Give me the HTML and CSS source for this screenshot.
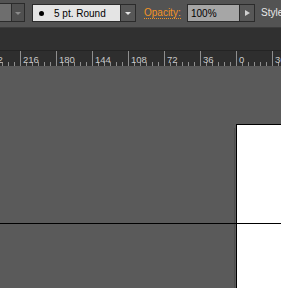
FILE: index.html
```html
<!DOCTYPE html>
<html>
<head>
<meta charset="utf-8">
<link rel="stylesheet" href="styles.css">
</head>
<body>
<div class="app">
  <div class="toolbar">
    <div class="field field-dim"></div>
    <div class="ddbtn"><span class="tri-down dim"></span></div>
    <div class="field stroke"><span class="dot"></span><span class="stroke-text">5 pt. Round</span></div>
    <div class="ddbtn"><span class="tri-down"></span></div>
    <span class="opacity-label"><span class="dotted">Opacity:</span></span>
    <div class="field opacity">100%</div>
    <div class="ddbtn"><span class="tri-right"></span></div>
    <span class="style-label">Style</span>
  </div>
  <div class="tabband"></div>
  <div class="ruler">
    <div class="seg first"><span class="num">252</span></div>
    <div class="seg"><span class="num">216</span></div>
    <div class="seg"><span class="num">180</span></div>
    <div class="seg"><span class="num">144</span></div>
    <div class="seg"><span class="num">108</span></div>
    <div class="seg"><span class="num">72</span></div>
    <div class="seg"><span class="num">36</span></div>
    <div class="seg"><span class="num">0</span></div>
    <div class="seg"><span class="num">36</span></div>
  </div>
  <div class="canvas">
    <div class="shadow"></div>
    <div class="artboard"></div>
    <div class="hline"></div>
  </div>
</div>
</body>
</html>
```
FILE: styles.css
```css
html, body {
  margin: 0;
  padding: 0;
  background: #5a5a5a;
}
.app {
  width: 281px;
  height: 288px;
  overflow: hidden;
  display: flex;
  flex-direction: column;
  font-family: "Liberation Sans", Arial, sans-serif;
}
.toolbar {
  height: 27px;
  flex: none;
  background: #535353;
  border-bottom: 1px solid #3c3c3c;
  display: flex;
  align-items: flex-start;
  white-space: nowrap;
  overflow: hidden;
}
.field {
  box-sizing: border-box;
  height: 18px;
  margin-top: 4px;
  border: 1px solid #2b2b2b;
  font-size: 10px;
  line-height: 16px;
  color: #000;
  flex: none;
}
.field-dim {
  width: 11px;
  height: 19px;
  margin-top: 3px;
  background: #6e6e6e;
  border-left: none;
  border-right: none;
}
.ddbtn {
  box-sizing: border-box;
  width: 15px;
  height: 18px;
  margin-top: 4px;
  background: #575757;
  border: 1px solid #2b2b2b;
  border-left: none;
  display: flex;
  align-items: center;
  justify-content: center;
  flex: none;
}
.field-dim + .ddbtn {
  width: 14px;
  height: 19px;
  margin-top: 3px;
  background: #505050;
  border-left: 1px solid #2b2b2b;
}
.tri-down {
  width: 0;
  height: 0;
  border-left: 3px solid transparent;
  border-right: 3px solid transparent;
  border-top: 3px solid #e6e6e6;
  margin-top: 1px;
}
.tri-down.dim {
  border-top-color: #8a8a8a;
}
.tri-right {
  width: 0;
  height: 0;
  border-top: 3px solid transparent;
  border-bottom: 3px solid transparent;
  border-left: 5px solid #cfcfcf;
  margin-left: 1px;
}
.stroke {
  width: 89px;
  margin-left: 7px;
  background: #e4e4e4;
  display: flex;
  align-items: flex-start;
  padding-top: 1px;
}
.dot {
  width: 5px;
  height: 5px;
  border-radius: 50%;
  background: #000;
  margin: 5px 0 0 6px;
  flex: none;
}
.stroke-text {
  margin-left: 10px;
}
.opacity-label {
  width: 43px;
  margin-left: 8px;
  flex: none;
  font-size: 10px;
  line-height: 16px;
  padding-top: 5px;
  color: #f39325;
}
.dotted {
  border-bottom: 1px dotted #f39325;
  padding-bottom: 0;
}
.opacity {
  width: 53px;
  background: #a6a6a6;
  padding: 1px 0 0 3px;
}
.style-label {
  margin-left: 6px;
  font-size: 10px;
  line-height: 16px;
  padding-top: 5px;
  color: #e8e8e8;
}
.tabband {
  height: 22px;
  flex: none;
  background: #303030;
}
.ruler {
  height: 15px;
  flex: none;
  border-top: 1px solid #242424;
  background: #2e2e2e;
  display: flex;
  overflow: hidden;
}
.seg {
  box-sizing: border-box;
  width: 36px;
  flex: none;
  height: 15px;
  border-left: 1px solid #8e8e8e;
  background-image: repeating-linear-gradient(to right, #8e8e8e 0 1px, transparent 1px 6px);
  background-origin: border-box;
  background-size: 100% 4px;
  background-position: left bottom;
  background-repeat: no-repeat;
  padding: 4px 0 0 2px;
}
.seg.first {
  margin-left: -16px;
}
.num {
  display: block;
  font-size: 9.5px;
  line-height: 9px;
  color: #c8c8c8;
}
.canvas {
  position: relative;
  flex: 1;
  background: #5a5a5a;
  overflow: hidden;
}
.artboard {
  position: absolute;
  left: 236px;
  top: 58px;
  right: -10px;
  bottom: -10px;
  background: #fff;
  border-top: 1px solid #000;
  border-left: 1px solid #000;
}
.shadow {
  position: absolute;
  left: 234px;
  top: 62px;
  bottom: 0;
  width: 1px;
  background: #4e4e4e;
}
.hline {
  position: absolute;
  left: 0;
  right: 0;
  top: 157px;
  height: 1px;
  background: #000;
}
```
